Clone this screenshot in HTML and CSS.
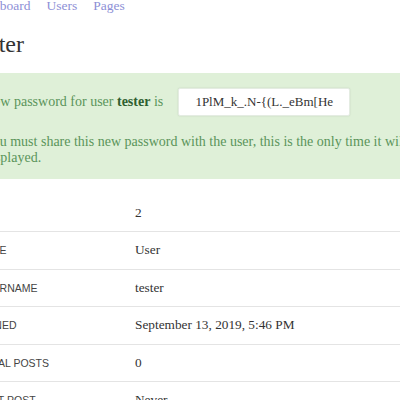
FILE: index.html
```html
<!DOCTYPE html>
<html>
<head>
<meta charset="utf-8">
<link rel="stylesheet" href="styles.css">
</head>
<body>
<div class="page">
  <nav class="nav">
    <a href="#">Dashboard</a>
    <a href="#">Users</a>
    <a href="#">Pages</a>
  </nav>
  <h1 class="title">tester</h1>
  <div class="alert">
    <div class="alert-row">
      <span>New password for user <strong>tester</strong> is</span>
      <span class="pw">1PlM_k_.N-{(L._eBm[He</span>
    </div>
    <p class="alert-note">You must share this new password with the user, this is the only time it will be displayed.</p>
  </div>
  <table class="details">
    <tr><th>ID</th><td>2</td></tr>
    <tr><th>ROLE</th><td>User</td></tr>
    <tr><th>USERNAME</th><td>tester</td></tr>
    <tr><th>JOINED</th><td>September 13, 2019, 5:46 PM</td></tr>
    <tr><th>TOTAL POSTS</th><td>0</td></tr>
    <tr><th>LAST POST</th><td>Never</td></tr>
  </table>
</div>
</body>
</html>
```
FILE: styles.css
```css
html, body { margin: 0; padding: 0; background: #fff; }
body { font-family: "Liberation Serif", serif; color: #333; overflow: hidden; height: 400px; }
.page { margin-left: -30px; width: 470px; }
.nav { display: flex; gap: 16px; height: 14px; margin-top: -3px; padding-left: 2px; font-size: 13.5px; line-height: 18px; }
.nav a { color: #8d8fd6; text-decoration: none; }
.title { font-size: 24px; font-weight: normal; margin: 18px 0 0 2px; line-height: 30px; color: #333; }
.alert { background: #dff0d8; margin-top: 14px; padding: 15px 14px 13px; color: #5a945a; font-size: 14px; }
.alert-row { display: flex; align-items: center; gap: 15px; }
.alert-row strong { color: #2f5f30; }
.pw { background: #fff; border: 1px solid #e4ece2; box-shadow: 0 0 2px rgba(0,0,0,0.12); border-radius: 2px; width: 170px; height: 26px; display: flex; align-items: center; justify-content: center; color: #333; font-size: 13px; }
.alert-note { margin: 18px 0 0; line-height: 16px; }
.details { border-collapse: collapse; width: 100%; margin-top: 15px; font-size: 13.3px; }
.details th { font-family: "Liberation Sans", sans-serif; font-weight: normal; font-size: 10.5px; text-align: left; width: 157px; padding: 0 0 0 8px; color: #444; }
.details td { height: 37px; padding: 0; }
.details tr + tr th, .details tr + tr td { border-top: 1px solid #e4e4e4; height: 36.5px; }
```
